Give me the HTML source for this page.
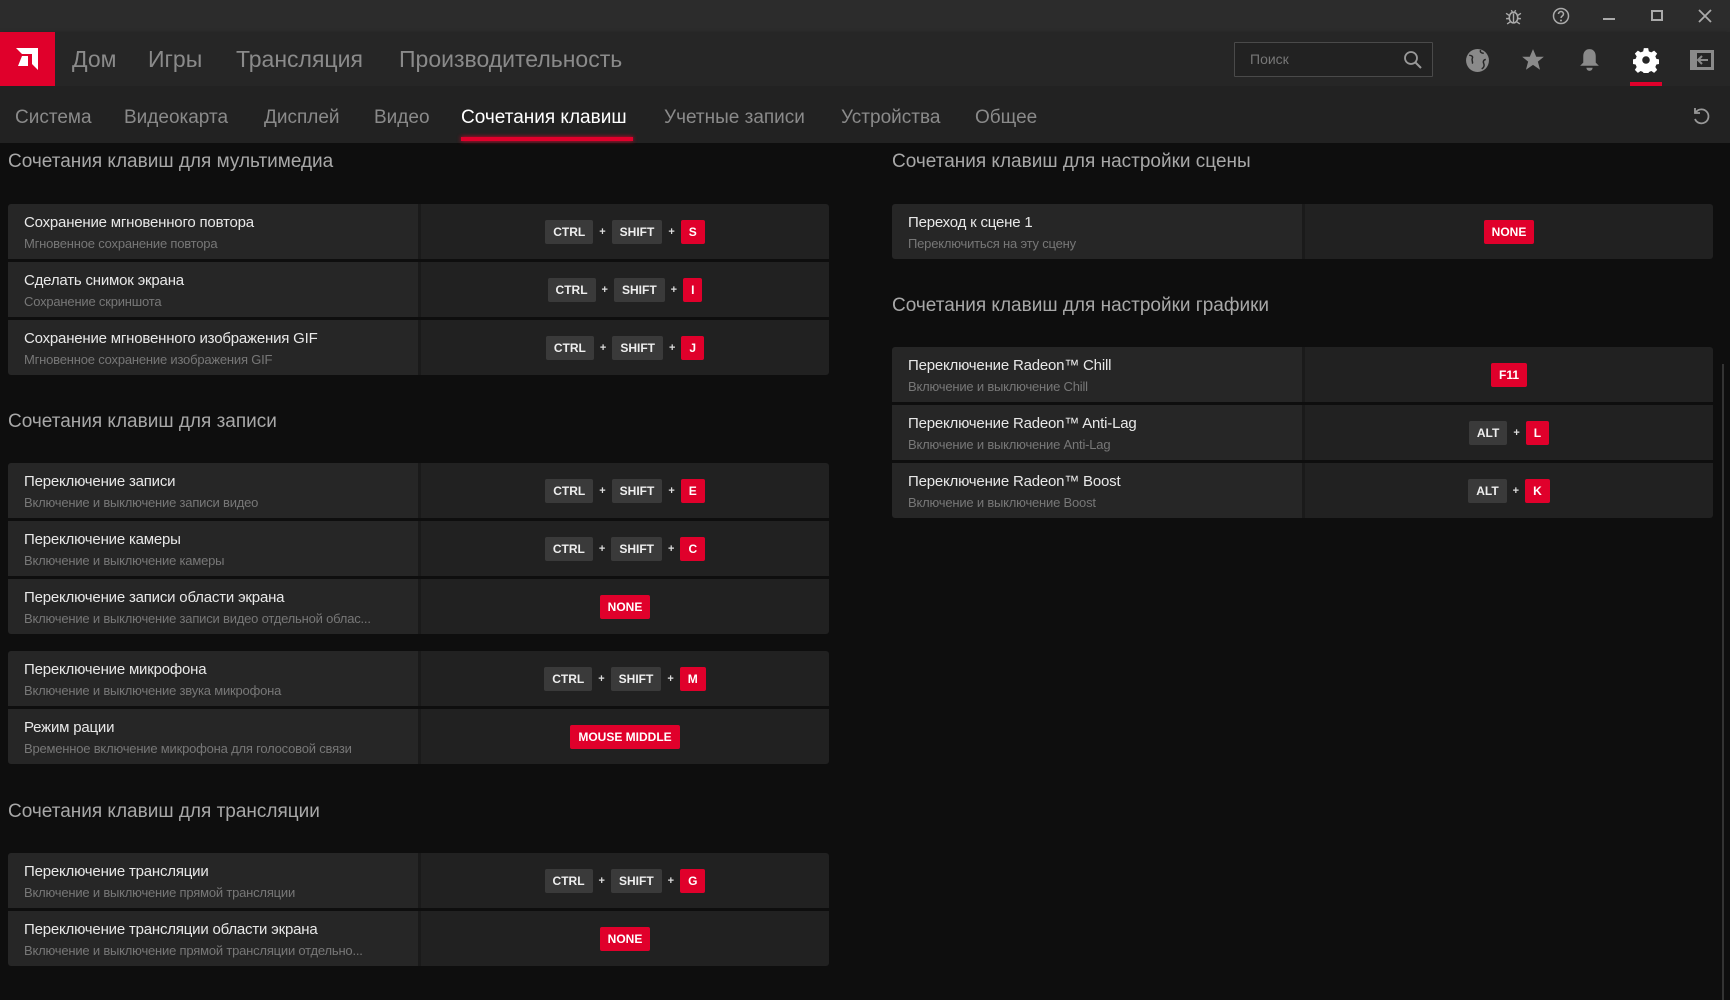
<!DOCTYPE html>
<html><head><meta charset="utf-8"><style>
*{box-sizing:border-box;margin:0;padding:0}
body{width:1730px;height:1000px;background:#0e0e0e;font-family:"Liberation Sans","DejaVu Sans",sans-serif;position:relative;overflow:hidden;color:#ddd}
.abs{position:absolute}
#title{left:0;top:0;width:1730px;height:32px;background:#2c2c2c}
#nav{left:0;top:32px;width:1730px;height:54px;background:#262626;box-shadow:0 2px 4px rgba(0,0,0,.5)}
#sub{left:0;top:86px;width:1730px;height:57px;background:#222}
.logo{left:0;top:32px;width:55px;height:54px;background:#e0002b}
.nv{top:46px;font-size:23px;color:#8a8a8a}
.sn{top:107px;font-size:19px;color:#8a8a8a}
.h{font-size:19px;color:#a8a8a8}
.card{position:absolute;width:821px;border-radius:3px;overflow:hidden}
.row{height:55px;margin-bottom:3px;display:flex}
.row:last-child{margin-bottom:0}
.lab{width:413px;background:#262626;padding:10px 0 0 16px;border-right:3px solid #1a1a1a}
.t{font-size:15px;color:#e8e8e8;white-space:nowrap;letter-spacing:-.2px}
.s{font-size:13px;color:#777;margin-top:5px;white-space:nowrap;letter-spacing:-.2px}
.keys{flex:1;background:#212121;display:flex;align-items:center;justify-content:center}
.k{background:#3a3a3a;height:24px;line-height:24px;padding:0 8px;font-weight:bold;font-size:12px;color:#eee;border-radius:2px}
.r{background:#e0002b;color:#fff}
.p{font-size:11px;font-weight:bold;color:#ddd;margin:0 6px}
</style></head><body>
<div id="title" class="abs"></div>
<div id="nav" class="abs"></div>
<div id="sub" class="abs"></div>
<div class="abs logo"><svg width="55" height="54" viewBox="0 0 55 54"><path d="M16 16h22v22l-6-6v-10h-10zM22 24h6v10h-10z" fill="#fff"/></svg></div>
<div class="abs nv" style="left:72px">Дом</div>
<div class="abs nv" style="left:148px">Игры</div>
<div class="abs nv" style="left:236px">Трансляция</div>
<div class="abs nv" style="left:399px">Производительность</div>
<div class="abs" style="left:1234px;top:42px;width:199px;height:35px;border:1px solid #4a4a4a;background:#222;border-radius:1px"></div>
<div class="abs" style="left:1250px;top:51px;font-size:14px;color:#777">Поиск</div>
<svg class="abs" style="left:1403px;top:50px" width="20" height="20" viewBox="0 0 20 20"><circle cx="8" cy="8" r="6" stroke="#999" stroke-width="1.8" fill="none"/><path d="M12.5 12.5L18 18" stroke="#999" stroke-width="2"/></svg>
<svg class="abs" style="left:1465px;top:48px" width="25" height="25" viewBox="0 0 24 24"><circle cx="12" cy="12" r="11" fill="#8a8a8a"/><path d="M4 7c2 0 4 1 3 3s1 3 0 5M15 2c-1 2 1 3 3 3M20 11c-2 0-3 2-2 4s0 4-2 5" stroke="#262626" stroke-width="1.4" fill="none"/></svg>
<svg class="abs" style="left:1520px;top:47px" width="26" height="26" viewBox="0 0 24 24"><path d="M12 2l3 7h7l-5.5 4.5 2 7.5-6.5-4.5-6.5 4.5 2-7.5L2 9h7z" fill="#8a8a8a"/></svg>
<svg class="abs" style="left:1577px;top:47px" width="25" height="26" viewBox="0 0 24 25"><path d="M12 2c-4 0-6 3-6 7v6l-3 3h18l-3-3v-6c0-4-2-7-6-7z" fill="#8a8a8a"/><path d="M9 20a3 3 0 006 0z" fill="#8a8a8a"/></svg>
<svg class="abs" style="left:1633px;top:47px" width="26" height="26" viewBox="0 0 24 24"><path d="M10 1h4l.6 3 2.3 1 2.6-1.7 2.8 2.8-1.7 2.6 1 2.3 3 .6v4l-3 .6-1 2.3 1.7 2.6-2.8 2.8-2.6-1.7-2.3 1-.6 3h-4l-.6-3-2.3-1-2.6 1.7-2.8-2.8 1.7-2.6-1-2.3-3-.6v-4l3-.6 1-2.3-1.7-2.6 2.8-2.8 2.6 1.7 2.3-1z" fill="#fff"/><circle cx="12" cy="12" r="3.5" fill="#262626"/></svg>
<div class="abs" style="left:1630px;top:82px;width:32px;height:4px;background:#e0002b"></div>
<svg class="abs" style="left:1690px;top:50px" width="24" height="20" viewBox="0 0 24 20"><rect x="0" y="0" width="24" height="20" fill="#8a8a8a"/><rect x="7" y="3" width="14" height="14" fill="#262626"/><path d="M18 10h-9M12 6l-4 4 4 4" stroke="#8a8a8a" stroke-width="2" fill="none"/></svg>
<svg class="abs" style="left:1505px;top:8px" width="17" height="17" viewBox="0 0 16 16"><ellipse cx="8" cy="9" rx="4" ry="5" fill="none" stroke="#aaa" stroke-width="1.5"/><path d="M1 5l3 2M15 5l-3 2M1 10h3M15 10h-3M2 15l3-2M14 15l-3-2M6 2l1 2M10 2l-1 2M8 5v9" stroke="#aaa" stroke-width="1.3"/></svg>
<svg class="abs" style="left:1552px;top:7px" width="18" height="18" viewBox="0 0 18 18"><circle cx="9" cy="9" r="7.5" fill="none" stroke="#aaa" stroke-width="1.5"/><path d="M6.5 7a2.5 2.5 0 115 0c0 2-2.5 2-2.5 4" stroke="#aaa" stroke-width="1.5" fill="none"/><circle cx="9" cy="13.5" r="1" fill="#aaa"/></svg>
<div class="abs" style="left:1603px;top:18px;width:12px;height:2px;background:#aaa"></div>
<div class="abs" style="left:1651px;top:10px;width:12px;height:11px;border:2px solid #aaa"></div>
<svg class="abs" style="left:1698px;top:9px" width="14" height="14" viewBox="0 0 14 14"><path d="M1 1l12 12M13 1L1 13" stroke="#aaa" stroke-width="1.8"/></svg>
<div class="abs sn" style="left:15px">Система</div>
<div class="abs sn" style="left:124px">Видеокарта</div>
<div class="abs sn" style="left:264px">Дисплей</div>
<div class="abs sn" style="left:374px">Видео</div>
<div class="abs sn" style="left:461px;color:#fff">Сочетания клавиш</div>
<div class="abs" style="left:461px;top:137px;width:172px;height:4px;background:#e0002b;box-shadow:0 0 4px #e0002b"></div>
<div class="abs sn" style="left:664px">Учетные записи</div>
<div class="abs sn" style="left:841px">Устройства</div>
<div class="abs sn" style="left:975px">Общее</div>
<svg class="abs" style="left:1691px;top:106px" width="20" height="20" viewBox="0 0 20 20"><path d="M5 6a7 7 0 11-1 7" stroke="#999" stroke-width="1.8" fill="none"/><path d="M4 2v5h5" stroke="#999" stroke-width="1.8" fill="none"/></svg>
<div class="abs" style="left:1722px;top:364px;width:2px;height:636px;background:#333"></div>

<div class="abs h" style="left:8px;top:151px">Сочетания клавиш для мультимедиа</div>
<div class="abs h" style="left:8px;top:411px">Сочетания клавиш для записи</div>
<div class="abs h" style="left:8px;top:801px">Сочетания клавиш для трансляции</div>
<div class="abs h" style="left:892px;top:151px">Сочетания клавиш для настройки сцены</div>
<div class="abs h" style="left:892px;top:295px">Сочетания клавиш для настройки графики</div>

<div class="card" style="left:8px;top:204px">
<div class="row"><div class="lab"><div class="t">Сохранение мгновенного повтора</div><div class="s">Мгновенное сохранение повтора</div></div><div class="keys"><span class="k">CTRL</span><span class="p">+</span><span class="k">SHIFT</span><span class="p">+</span><span class="k r">S</span></div></div>
<div class="row"><div class="lab"><div class="t">Сделать снимок экрана</div><div class="s">Сохранение скриншота</div></div><div class="keys"><span class="k">CTRL</span><span class="p">+</span><span class="k">SHIFT</span><span class="p">+</span><span class="k r">I</span></div></div>
<div class="row"><div class="lab"><div class="t">Сохранение мгновенного изображения GIF</div><div class="s">Мгновенное сохранение изображения GIF</div></div><div class="keys"><span class="k">CTRL</span><span class="p">+</span><span class="k">SHIFT</span><span class="p">+</span><span class="k r">J</span></div></div>
</div>

<div class="card" style="left:8px;top:463px">
<div class="row"><div class="lab"><div class="t">Переключение записи</div><div class="s">Включение и выключение записи видео</div></div><div class="keys"><span class="k">CTRL</span><span class="p">+</span><span class="k">SHIFT</span><span class="p">+</span><span class="k r">E</span></div></div>
<div class="row"><div class="lab"><div class="t">Переключение камеры</div><div class="s">Включение и выключение камеры</div></div><div class="keys"><span class="k">CTRL</span><span class="p">+</span><span class="k">SHIFT</span><span class="p">+</span><span class="k r">C</span></div></div>
<div class="row"><div class="lab"><div class="t">Переключение записи области экрана</div><div class="s">Включение и выключение записи видео отдельной облас...</div></div><div class="keys"><span class="k r">NONE</span></div></div>
</div>

<div class="card" style="left:8px;top:651px">
<div class="row"><div class="lab"><div class="t">Переключение микрофона</div><div class="s">Включение и выключение звука микрофона</div></div><div class="keys"><span class="k">CTRL</span><span class="p">+</span><span class="k">SHIFT</span><span class="p">+</span><span class="k r">M</span></div></div>
<div class="row"><div class="lab"><div class="t">Режим рации</div><div class="s">Временное включение микрофона для голосовой связи</div></div><div class="keys"><span class="k r">MOUSE MIDDLE</span></div></div>
</div>

<div class="card" style="left:8px;top:853px">
<div class="row"><div class="lab"><div class="t">Переключение трансляции</div><div class="s">Включение и выключение прямой трансляции</div></div><div class="keys"><span class="k">CTRL</span><span class="p">+</span><span class="k">SHIFT</span><span class="p">+</span><span class="k r">G</span></div></div>
<div class="row"><div class="lab"><div class="t">Переключение трансляции области экрана</div><div class="s">Включение и выключение прямой трансляции отдельно...</div></div><div class="keys"><span class="k r">NONE</span></div></div>
</div>

<div class="card" style="left:892px;top:204px">
<div class="row"><div class="lab"><div class="t">Переход к сцене 1</div><div class="s">Переключиться на эту сцену</div></div><div class="keys"><span class="k r">NONE</span></div></div>
</div>

<div class="card" style="left:892px;top:347px">
<div class="row"><div class="lab"><div class="t">Переключение Radeon™ Chill</div><div class="s">Включение и выключение Chill</div></div><div class="keys"><span class="k r">F11</span></div></div>
<div class="row"><div class="lab"><div class="t">Переключение Radeon™ Anti-Lag</div><div class="s">Включение и выключение Anti-Lag</div></div><div class="keys"><span class="k">ALT</span><span class="p">+</span><span class="k r">L</span></div></div>
<div class="row"><div class="lab"><div class="t">Переключение Radeon™ Boost</div><div class="s">Включение и выключение Boost</div></div><div class="keys"><span class="k">ALT</span><span class="p">+</span><span class="k r">K</span></div></div>
</div>
</body></html>
